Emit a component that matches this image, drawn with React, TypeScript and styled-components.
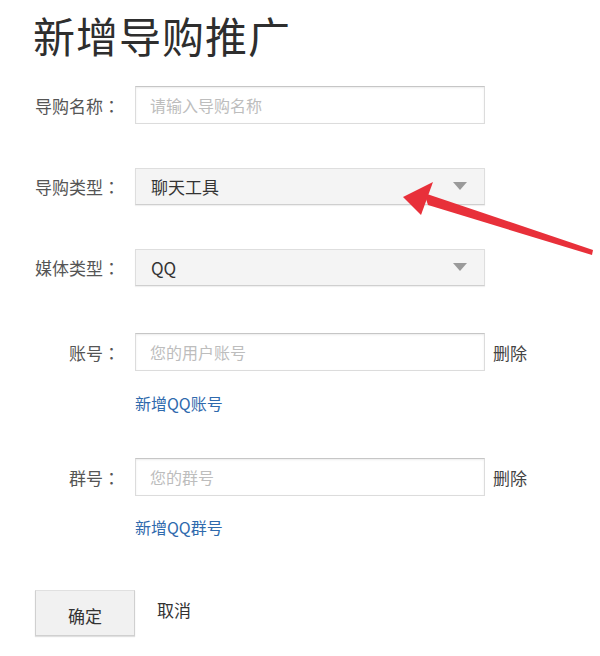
import React from "react";
import styled, { createGlobalStyle } from "styled-components";

const Global = createGlobalStyle`
  html, body { margin: 0; padding: 0; background: #fff; }
  body { font-family: "Noto Sans CJK SC", "Noto Sans", sans-serif; }
  * { box-sizing: border-box; }
`;

const Page = styled.div`
  position: relative;
  width: 600px;
  height: 656px;
  padding: 10px 0 0 33px;
  overflow: hidden;
`;

const Title = styled.h1`
  margin: 0;
  font-size: 42px;
  line-height: 50px;
  font-weight: 400;
  color: #2e2e2e;
  letter-spacing: 1px;
`;

const Row = styled.div<{ $mt: number }>`
  display: flex;
  align-items: center;
  margin-top: ${(p) => p.$mt}px;
  height: 38px;
`;

const Label = styled.label`
  width: 102px;
  padding-right: 15px;
  text-align: right;
  font-size: 17px;
  color: #555;
  white-space: nowrap;
`;

const Colon = styled.span`
  display: inline-block;
  width: 17px;
  text-align: center;
  font-family: "Noto Sans CJK TC", "Noto Sans CJK SC", sans-serif;
`;

const TextInput = styled.input`
  width: 350px;
  height: 38px;
  border: 1px solid #dcdcdc;
  border-top-color: #c6c6c6;
  box-shadow: inset 0 1px 2px rgba(0, 0, 0, 0.08);
  padding: 0 14px;
  font-family: inherit;
  font-size: 16px;
  color: #333;
  background: #fff;
  outline: none;
  &::placeholder { color: #bdbdbd; }
`;

const Select = styled.div`
  position: relative;
  width: 350px;
  height: 37px;
  display: flex;
  align-items: center;
  padding: 0 14px 0 15px;
  border: 1px solid #dedede;
  border-bottom-color: #cfcfcf;
  background: #f4f4f4;
  box-shadow: 0 1px 1px rgba(0, 0, 0, 0.06);
  font-size: 17px;
  color: #333;
`;

const SelectValue = styled.span`
  flex: 1;
`;

const Caret = styled.span`
  width: 0;
  height: 0;
  margin-right: 3px;
  border-left: 7px solid transparent;
  border-right: 7px solid transparent;
  border-top: 8px solid #9a9a9a;
`;

const Remove = styled.span`
  margin-left: 8px;
  font-size: 17px;
  color: #444;
`;

const LinkRow = styled.div<{ $mt: number }>`
  margin-top: ${(p) => p.$mt}px;
  padding-left: 102px;
  height: 24px;
  line-height: 24px;
`;

const AddLink = styled.a`
  font-size: 16px;
  color: #2f6aad;
  text-decoration: none;
`;

const Actions = styled.div`
  display: flex;
  align-items: center;
  gap: 22px;
  margin-top: 51px;
`;

const Confirm = styled.button`
  width: 100px;
  height: 46px;
  margin-left: 2px;
  border: 1px solid #d0d0d0;
  border-top-color: #e0e0e0;
  background: #f1f1f1;
  box-shadow: 0 1px 1px rgba(0, 0, 0, 0.12);
  font-family: inherit;
  font-size: 17px;
  color: #333;
  padding: 4px 0 0 0;
`;

const Cancel = styled.span`
  font-size: 17px;
  color: #333;
  margin-top: -8px;
`;

const Annotation = styled.svg`
  position: absolute;
  left: 0;
  top: 0;
  pointer-events: none;
`;

function FieldLabel({ text }: { text: string }) {
  return (
    <Label>
      {text}
      <Colon>：</Colon>
    </Label>
  );
}

export default function App() {
  return (
    <>
      <Global />
      <Page>
        <Title>新增导购推广</Title>

        <Row $mt={26}>
          <FieldLabel text="导购名称" />
          <TextInput placeholder="请输入导购名称" />
        </Row>

        <Row $mt={43}>
          <FieldLabel text="导购类型" />
          <Select>
            <SelectValue>聊天工具</SelectValue>
            <Caret />
          </Select>
        </Row>

        <Row $mt={43}>
          <FieldLabel text="媒体类型" />
          <Select>
            <SelectValue>QQ</SelectValue>
            <Caret />
          </Select>
        </Row>

        <Row $mt={47}>
          <FieldLabel text="账号" />
          <TextInput placeholder="您的用户账号" />
          <Remove>删除</Remove>
        </Row>
        <LinkRow $mt={20}>
          <AddLink href="#">新增QQ账号</AddLink>
        </LinkRow>

        <Row $mt={43}>
          <FieldLabel text="群号" />
          <TextInput placeholder="您的群号" />
          <Remove>删除</Remove>
        </Row>
        <LinkRow $mt={19}>
          <AddLink href="#">新增QQ群号</AddLink>
        </LinkRow>

        <Actions>
          <Confirm>确定</Confirm>
          <Cancel>取消</Cancel>
        </Actions>

        <Annotation width="600" height="656" viewBox="0 0 600 656">
          <polygon points="403,197 433,182 421,215" fill="#e8303a" />
          <polygon points="424,193 428,205 592,255 593,250" fill="#e8303a" />
        </Annotation>
      </Page>
    </>
  );
}
